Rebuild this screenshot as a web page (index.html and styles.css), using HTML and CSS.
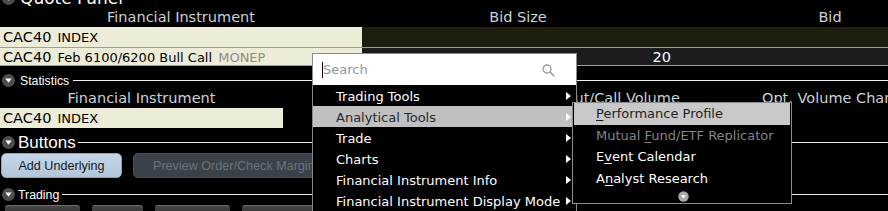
FILE: index.html
```html
<!DOCTYPE html>
<html>
<head>
<meta charset="utf-8">
<link rel="stylesheet" href="styles.css">
</head>
<body>
<div class="screen">
  <div class="panel-title">
    <svg class="twisty" width="13" height="13" viewBox="0 0 13 13"><circle cx="6.5" cy="6.5" r="6.5" fill="#4d4d4d"/><polygon points="3.3,4.6 9.7,4.6 6.5,8.8" fill="#fff"/></svg>
    <span class="title-text">Quote Panel</span>
  </div>

  <div class="qgrid">
    <div class="qh">Financial Instrument</div>
    <div class="qh">Bid Size</div>
    <div class="qh">Bid</div>

    <div class="cell r1 inst"><span class="sym">CAC40</span> <span class="desc">INDEX</span></div>
    <div class="cell r1 olive"></div>
    <div class="cell r1 olive"></div>

    <div class="cell r2 inst"><span class="sym">CAC40</span> <span class="desc">Feb 6100/6200 Bull Call</span> <span class="exch">MONEP</span></div>
    <div class="cell r2 dark num">20</div>
    <div class="cell r2 dark"></div>
  </div>

  <div class="sec sec-stats">
    <svg class="twisty" width="13" height="13" viewBox="0 0 13 13"><circle cx="6.5" cy="6.5" r="6.5" fill="#4d4d4d"/><polygon points="3.3,4.6 9.7,4.6 6.5,8.8" fill="#fff"/></svg>
    <span class="sec-label lbl-stats">Statistics</span>
    <span class="sec-line"></span>
  </div>

  <div class="sgrid">
    <div class="sh center">Financial Instrument</div>
    <div class="sh"></div>
    <div class="sh">Put/Call Volume</div>
    <div class="sh">Opt. Volume Change</div>
  </div>
  <div class="srow">
    <div class="inst scell"><span class="sym">CAC40</span> <span class="desc">INDEX</span></div>
  </div>

  <div class="sec sec-buttons">
    <svg class="twisty" width="13" height="13" viewBox="0 0 13 13"><circle cx="6.5" cy="6.5" r="6.5" fill="#4d4d4d"/><polygon points="3.3,4.6 9.7,4.6 6.5,8.8" fill="#fff"/></svg>
    <span class="sec-label lbl-buttons">Buttons</span>
    <span class="sec-line"></span>
  </div>

  <div class="btn-row">
    <div class="btn btn-primary">Add Underlying</div>
    <div class="btn btn-disabled">Preview Order/Check Margin</div>
  </div>

  <div class="sec sec-trading">
    <svg class="twisty" width="13" height="13" viewBox="0 0 13 13"><circle cx="6.5" cy="6.5" r="6.5" fill="#4d4d4d"/><polygon points="3.3,4.6 9.7,4.6 6.5,8.8" fill="#fff"/></svg>
    <span class="sec-label lbl-trading">Trading</span>
    <span class="sec-line"></span>
  </div>

  <div class="trade-row">
    <div class="tbtn w1"></div>
    <div class="tbtn w2"></div>
    <div class="tbtn w3"></div>
    <div class="tbtn w4"></div>
  </div>
</div>

<div class="ctx-menu">
  <div class="search">
    <span class="caret"></span><span class="placeholder">Search</span>
    <svg class="mag" width="13" height="13" viewBox="0 0 13 13"><circle cx="5" cy="5" r="4" fill="none" stroke="#9a9a9a" stroke-width="1.3"/><line x1="8" y1="8" x2="11.8" y2="11.8" stroke="#9a9a9a" stroke-width="1.6" stroke-linecap="round"/></svg>
  </div>
  <div class="mi"><span class="mi-label">Trading Tools</span><span class="arrow"></span></div>
  <div class="mi active"><span class="mi-label">Analytical Tools</span><span class="arrow"></span></div>
  <div class="mi"><span class="mi-label">Trade</span><span class="arrow"></span></div>
  <div class="mi"><span class="mi-label">Charts</span><span class="arrow"></span></div>
  <div class="mi"><span class="mi-label">Financial Instrument Info</span><span class="arrow"></span></div>
  <div class="mi"><span class="mi-label">Financial Instrument Display Mode</span><span class="arrow"></span></div>
</div>

<div class="sub-menu">
  <div class="si active tall"><u>P</u>erformance Profile</div>
  <div class="si disabled">Mutual <u>F</u>und/ETF Replicator</div>
  <div class="si tall">E<u>v</u>ent Calendar</div>
  <div class="si">A<u>n</u>alyst Research</div>
  <div class="si-more">
    <svg width="11" height="11" viewBox="0 0 11 11"><circle cx="5.5" cy="5.5" r="5.2" fill="#a8a8a8"/><polygon points="3,4.2 8,4.2 5.5,7.6" fill="#fff"/></svg>
  </div>
</div>
</body>
</html>
```

FILE: styles.css
```css
* { box-sizing: border-box; margin: 0; padding: 0; }

html, body {
  width: 888px;
  height: 211px;
  overflow: hidden;
  background: #000;
}

body {
  position: relative;
  font-family: "DejaVu Sans", sans-serif;
  color: #fff;
}

.screen {
  width: 888px;
}

/* panel title (cut at top) */
.panel-title {
  display: flex;
  align-items: center;
  height: 17px;
  margin-top: -10px;
}
.twisty {
  flex: none;
  margin-left: 2px;
}
.title-text {
  margin-left: 5px;
  font-size: 17px;
  line-height: 17px;
  color: #fff;
}

/* quote grid */
.qgrid {
  display: grid;
  grid-template-columns: 362px 312px 312px;
}
.qh {
  height: 20px;
  line-height: 20px;
  text-align: center;
  font-size: 14.5px;
  color: #c9d1da;
  white-space: nowrap;
}
.cell {
  white-space: nowrap;
  border-bottom: 1px solid #9e9e9e;
}
.r1 { height: 21px; line-height: 20px; }
.r2 { height: 18px; line-height: 18px; }
.inst {
  background: #edecd8;
  color: #000;
  padding-left: 3px;
  overflow: hidden;
}
.olive { background: #1f1d0d; }
.dark { background: #1c1c1e; }
.num {
  text-align: right;
  padding-right: 3px;
  font-size: 14.5px;
  color: #fff;
}
.sym { font-size: 14.5px; }
.desc { font-size: 13px; margin-left: 1px; }
.exch { font-size: 13px; color: #8c8c8c; margin-left: 1px; }

/* section headers */
.sec {
  display: flex;
  align-items: center;
  height: 17px;
}
.sec-label {
  font-family: "Liberation Sans", sans-serif;
  color: #fff;
  white-space: nowrap;
}
.lbl-stats { margin-left: 5px; font-size: 12.3px; }
.lbl-buttons { margin-left: 3px; font-size: 17px; }
.lbl-trading { margin-left: 3px; font-size: 12.3px; }
.sec-line {
  flex: 1;
  height: 1px;
  background: #f0f0f0;
  margin-left: 4px;
}
.sec-stats { margin-top: 6px; }
.sec-buttons { margin-top: 6px; }
.sec-trading { margin-top: 8px; }
.lbl-buttons + .sec-line { margin-left: 2px; }
.lbl-trading + .sec-line { margin-left: 3px; }

/* statistics grid */
.sgrid {
  display: grid;
  grid-template-columns: 283px 283px 196px 1fr;
}
.sh {
  height: 19px;
  line-height: 19px;
  font-size: 14.5px;
  color: #c9d1da;
  white-space: nowrap;
  overflow: hidden;
}
.sh.center { text-align: center; }
.srow {
  display: flex;
  height: 20px;
}
.scell {
  width: 283px;
  height: 20px;
  line-height: 20px;
}

/* buttons */
.btn-row {
  display: flex;
  gap: 11px;
  margin-top: 2px;
  height: 25px;
}
.btn {
  height: 25px;
  line-height: 25px;
  border-radius: 5px;
  font-family: "Liberation Sans", sans-serif;
  font-size: 12.6px;
  white-space: nowrap;
}
.btn-primary {
  margin-left: 1px;
  width: 121px;
  text-align: center;
  color: #1a1a1a;
  background: linear-gradient(#c4d6e8, #b2c6da);
  border: 1px solid #8ea4ba;
}
.btn-disabled {
  width: 240px;
  padding-left: 19px;
  color: #6b7179;
  background: #3b4148;
  border: 1px solid #4a5058;
}

/* trading buttons (cut off) */
.trade-row {
  display: flex;
  gap: 12px;
  margin-top: 2px;
  padding-left: 5px;
}
.tbtn {
  height: 20px;
  border-radius: 3px 3px 0 0;
  border-top: 1px solid #6e6e6e;
  background: linear-gradient(#464646, #1c1c1c);
}
.w1 { width: 75px; }
.w2 { width: 51px; }
.w3 { width: 75px; }
.w4 { width: 100px; }

/* context menu */
.ctx-menu {
  position: absolute;
  left: 312px;
  top: 53px;
  width: 265px;
  height: 170px;
  background: #000;
  border: 1px solid #8a8a8a;
  font-size: 13px;
  z-index: 2;
}
.search {
  display: flex;
  align-items: center;
  height: 31px;
  background: #fff;
  padding-left: 9px;
}
.caret {
  width: 1px;
  height: 16px;
  background: #000;
  margin-top: 1px;
}
.placeholder {
  color: #8a96a3;
  font-size: 13px;
  flex: 1;
}
.mag {
  margin-right: 21px;
  margin-top: 1px;
}
.mi {
  display: flex;
  align-items: center;
  height: 21px;
  padding-left: 23px;
  padding-right: 5px;
  white-space: nowrap;
  color: #fff;
}
.mi-label {
  flex: 1;
  line-height: 21px;
  padding-top: 1px;
}
.mi.active {
  background: #c0c0c0;
  color: #2a2a2a;
}
.arrow {
  width: 0;
  height: 0;
  border-left: 5px solid #fff;
  border-top: 4px solid transparent;
  border-bottom: 4px solid transparent;
}

/* sub menu */
.sub-menu {
  position: absolute;
  left: 572px;
  top: 102px;
  width: 220px;
  height: 102px;
  background: #000;
  border: 1px solid #8c8c8c;
  font-size: 13px;
  z-index: 3;
}
.si {
  height: 21px;
  line-height: 21px;
  padding-left: 23px;
  color: #fff;
  white-space: nowrap;
}
.si.tall { height: 22px; line-height: 22px; }
.si.active {
  margin: 0 1px;
  padding-left: 22px;
  background: #c8c8c8;
  color: #1e1e1e;
}
.si.disabled { color: #858585; }
.si u { text-decoration: underline; text-underline-offset: 2px; }
.si-more {
  display: flex;
  justify-content: center;
  padding-left: 2px;
  height: 14px;
  align-items: center;
}
```
